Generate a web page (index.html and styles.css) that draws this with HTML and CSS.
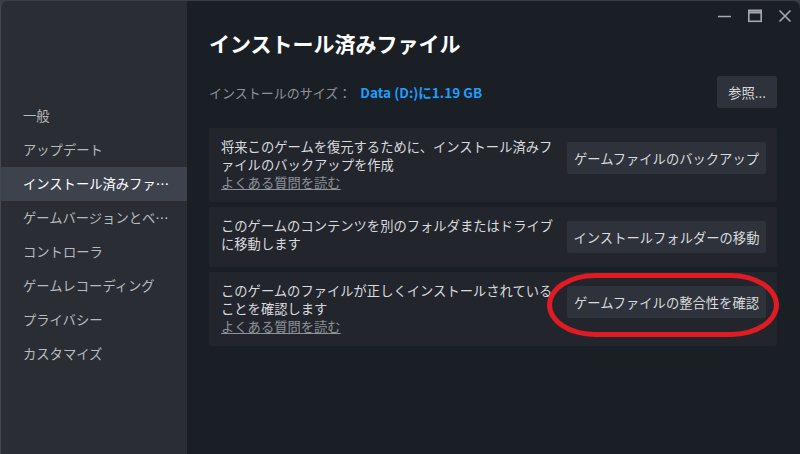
FILE: index.html
```html
<!DOCTYPE html>
<html lang="ja">
<head>
<meta charset="utf-8">
<title>インストール済みファイル</title>
<link rel="stylesheet" href="styles.css">
</head>
<body>
<div class="window">
  <nav class="sidebar">
    <div class="nav-item">一般</div>
    <div class="nav-item">アップデート</div>
    <div class="nav-item active">インストール済みファイル</div>
    <div class="nav-item">ゲームバージョンとベータ</div>
    <div class="nav-item">コントローラ</div>
    <div class="nav-item">ゲームレコーディング</div>
    <div class="nav-item">プライバシー</div>
    <div class="nav-item">カスタマイズ</div>
  </nav>
  <main class="main">
    <div class="controls">
      <svg class="ctl" width="16" height="16" viewBox="0 0 16 16"><path d="M1 8.5h13" stroke="currentColor" stroke-width="1.6" fill="none"/></svg>
      <svg class="ctl" width="16" height="16" viewBox="0 0 16 16"><rect x="1.8" y="2.3" width="12.4" height="11" stroke="currentColor" stroke-width="1.6" fill="none"/><path d="M1.8 4.4h12.4" stroke="currentColor" stroke-width="2.2"/></svg>
      <svg class="ctl" width="16" height="16" viewBox="0 0 16 16"><path d="M2.5 2.5l11 11M13.5 2.5l-11 11" stroke="currentColor" stroke-width="1.6" fill="none"/></svg>
    </div>
    <h1 class="title">インストール済みファイル</h1>
    <div class="size-row">
      <div class="size-text"><span class="size-label">インストールのサイズ：</span><span class="size-value">Data (D:)に1.19 GB</span></div>
      <button class="btn btn-browse">参照...</button>
    </div>
    <div class="cards">
      <div class="card">
        <div class="card-text"><p class="line">将来このゲームを復元するために、インストール済みファイルのバックアップを作成</p><a class="faq">よくある質問を読む</a></div>
        <button class="btn btn-action">ゲームファイルのバックアップ</button>
      </div>
      <div class="card">
        <div class="card-text"><p class="line">このゲームのコンテンツを別のフォルダまたはドライブに移動します</p></div>
        <button class="btn btn-action">インストールフォルダーの移動</button>
      </div>
      <div class="card">
        <div class="card-text"><p class="line nowrap">このゲームのファイルが正しくインストールされている</p><p class="line">ことを確認します</p><a class="faq">よくある質問を読む</a></div>
        <button class="btn btn-action">ゲームファイルの整合性を確認</button>
        <div class="highlight"></div>
      </div>
    </div>
  </main>
</div>
</body>
</html>
```
FILE: styles.css
```css
* { box-sizing: border-box; }
html, body {
  margin: 0;
  padding: 0;
  width: 800px;
  height: 454px;
  overflow: hidden;
  background: #3a3d42;
  font-family: "Noto Sans CJK JP", "Noto Sans", sans-serif;
}
.window {
  margin-top: 1px;
  height: 453px;
  display: flex;
  border-radius: 7px 7px 0 0;
  overflow: hidden;
  border-left: 1px solid #45484e;
}
.sidebar {
  width: 186px;
  flex: none;
  background: #2a2d34;
  padding-top: 98px;
}
.nav-item {
  height: 34px;
  line-height: 34px;
  padding-left: 22px;
  padding-right: 18px;
  font-size: 13.3px;
  color: #b7babe;
  white-space: nowrap;
  overflow: hidden;
  text-overflow: ellipsis;
}
.nav-item.active {
  background: #3d424d;
  color: #ffffff;
}
.main {
  flex: 1;
  position: relative;
  background: #1a1e25;
  padding: 27px 24px 0 22px;
}
.controls {
  position: absolute;
  top: 7px;
  right: 8px;
  display: flex;
  gap: 14px;
  color: #a6aab0;
}
.ctl { display: block; }
.title {
  margin: 0;
  font-size: 21px;
  line-height: 30px;
  font-weight: 700;
  color: #ffffff;
}
.size-row {
  margin-top: 18px;
  height: 32px;
  display: flex;
  align-items: center;
  justify-content: space-between;
}
.size-text {
  font-size: 13px;
  color: #8e9399;
}
.size-value {
  margin-left: 9px;
  color: #1a9fff;
  font-weight: 700;
  font-size: 13.5px;
}
.btn {
  border: none;
  border-radius: 2px;
  background: #2e323a;
  color: #d9dbde;
  font-family: inherit;
  font-size: 13.3px;
  padding: 0;
}
.btn-browse {
  width: 60px;
  height: 32px;
}
.cards {
  margin-top: 20px;
  display: flex;
  flex-direction: column;
  gap: 5px;
}
.card {
  position: relative;
  display: flex;
  align-items: flex-start;
  gap: 12px;
  background: #22252c;
  border-radius: 2px;
  padding: 10px 11px 10px 12px;
}
.card-text {
  width: 334px;
  flex: none;
  font-size: 13.3px;
  line-height: 18px;
  color: #d9dbde;
}
.line {
  margin: 0;
}
.nowrap { white-space: nowrap; }
.faq {
  display: block;
  height: 18px;
  color: #8d939a;
  text-decoration: underline;
}
.btn-action {
  width: 199px;
  height: 32px;
  margin: 4px 0 4px;
  flex: none;
}
.highlight {
  position: absolute;
  left: 338px;
  top: 1px;
  width: 232px;
  height: 64px;
  border: 5px solid #e11b23;
  border-radius: 48px / 32px;
  pointer-events: none;
}
```
